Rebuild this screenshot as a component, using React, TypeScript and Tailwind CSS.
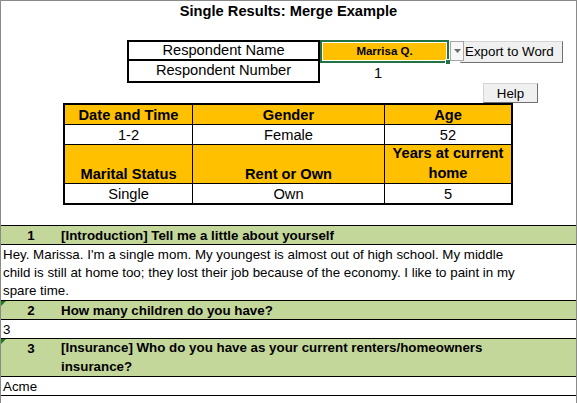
import React from 'react';

const gold = 'bg-[#FFC000]';

const Cell: React.FC<{ children?: React.ReactNode; head?: boolean; className?: string }> = ({ children, head, className = '' }) => (
  <div
    className={`flex items-end justify-center text-center leading-[17px] ${head ? 'bg-[#FFC000] font-bold' : 'bg-white'} ${className}`}
  >
    {children}
  </div>
);

const Indicator: React.FC = () => (
  <svg className="absolute top-0 left-0" width="5" height="5" viewBox="0 0 5 5">
    <polygon points="0,0 5,0 0,5" fill="#1f7a1f" />
  </svg>
);

const App: React.FC = () => {
  return (
    <div className="w-[577px] h-[403px] overflow-hidden bg-white border-t border-x border-[#8a8a8a] font-['Liberation_Sans',Arial,sans-serif] text-[14.67px] text-black">
      {/* Title */}
      <div className="h-[39px] text-center font-bold leading-[20px]">Single Results: Merge Example</div>

      {/* Respondent block */}
      <div className="flex h-[43px] ml-[126px]">
        <div className="w-[193px] border-2 border-black flex flex-col">
          <div className="h-[19px] border-b-2 border-black flex items-center justify-center leading-[17px]">Respondent Name</div>
          <div className="h-[18px] flex items-center justify-center leading-[17px]">Respondent Number</div>
        </div>
        <div className="w-[129px] flex flex-col">
          <div className={`relative h-[23px] border-2 border-[#217346] ${gold} shadow-[inset_0_0_0_1px_white] flex items-center justify-center font-bold text-[11.5px]`}>
            Marrisa Q.
            <span className="absolute -right-[4px] -bottom-[4px] w-[6px] h-[6px] bg-[#217346] border border-white" />
          </div>
          <div className="h-[20px] pl-[54px] leading-[20px]">1</div>
        </div>
        <div className="relative z-10 ml-[1px] mt-[1px] w-[14px] h-[20px] bg-[#f7f7f7] border border-[#a6a6a6] flex items-center justify-center">
          <svg width="7" height="4" viewBox="0 0 7 4">
            <polygon points="0,0 7,0 3.5,4" fill="#6b6b6b" />
          </svg>
        </div>
        <button className="-ml-[4px] mt-[1px] w-[103px] h-[22px] bg-[#f0f0f0] border border-[#d4d4d4] border-r-[#707070] border-b-[#707070] text-[13.33px] leading-[18px] pl-[4px] text-left">
          Export to Word
        </button>
      </div>

      {/* Help */}
      <div className="h-[20px] flex">
        <button className="ml-[482px] w-[55px] h-[20px] bg-[#f0f0f0] border border-[#d4d4d4] border-r-[#707070] border-b-[#707070] text-[13.33px] leading-[17px]">
          Help
        </button>
      </div>

      {/* Profile table */}
      <div className="ml-[62px] w-[450px] border-2 border-black bg-black grid grid-cols-[127px_191px_126px] grid-rows-[19px_19px_38px_19px] gap-px">
        <Cell head>Date and Time</Cell>
        <Cell head>Gender</Cell>
        <Cell head>Age</Cell>
        <Cell>1-2</Cell>
        <Cell>Female</Cell>
        <Cell>52</Cell>
        <Cell head>Marital Status</Cell>
        <Cell head>Rent or Own</Cell>
        <Cell head className="leading-[20px]">
          Years at current
          <br />
          home
        </Cell>
        <Cell>Single</Cell>
        <Cell>Own</Cell>
        <Cell>5</Cell>
      </div>

      {/* Questions */}
      <div className="mt-[20px] border-t border-black text-[13.33px]">
        <div className="relative h-[19px] flex items-end bg-[#C4D79B] border-b border-black font-bold leading-[17px]">
          <div className="w-[60px] text-center">1</div>
          <div className="w-[464px]">[Introduction] Tell me a little about yourself</div>
        </div>
        <div className="h-[56px] flex items-end border-b border-black">
          <p className="w-[524px] pl-[2px] leading-[18px]">
            Hey. Marissa. I'm a single mom. My youngest is almost out of high school. My middle child is still at home too; they lost their job because of the economy. I like to paint in my spare time.
          </p>
        </div>

        <div className="relative h-[19px] flex items-end bg-[#C4D79B] border-b border-black font-bold leading-[17px]">
          <Indicator />
          <div className="w-[60px] text-center">2</div>
          <div className="w-[464px]">How many children do you have?</div>
        </div>
        <div className="h-[19px] flex items-end border-b border-black pl-[2px] leading-[17px]">3</div>

        <div className="relative h-[38px] flex items-end bg-[#C4D79B] border-b border-black font-bold">
          <Indicator />
          <div className="w-[60px] self-start text-center leading-[17px] pt-[1px]">3</div>
          <div className="w-[464px] leading-[19px]">[Insurance] Who do you have as your current renters/homeowners insurance?</div>
        </div>
        <div className="h-[19px] flex items-end border-b border-black pl-[2px] leading-[17px]">Acme</div>
      </div>
    </div>
  );
};

export default App;
